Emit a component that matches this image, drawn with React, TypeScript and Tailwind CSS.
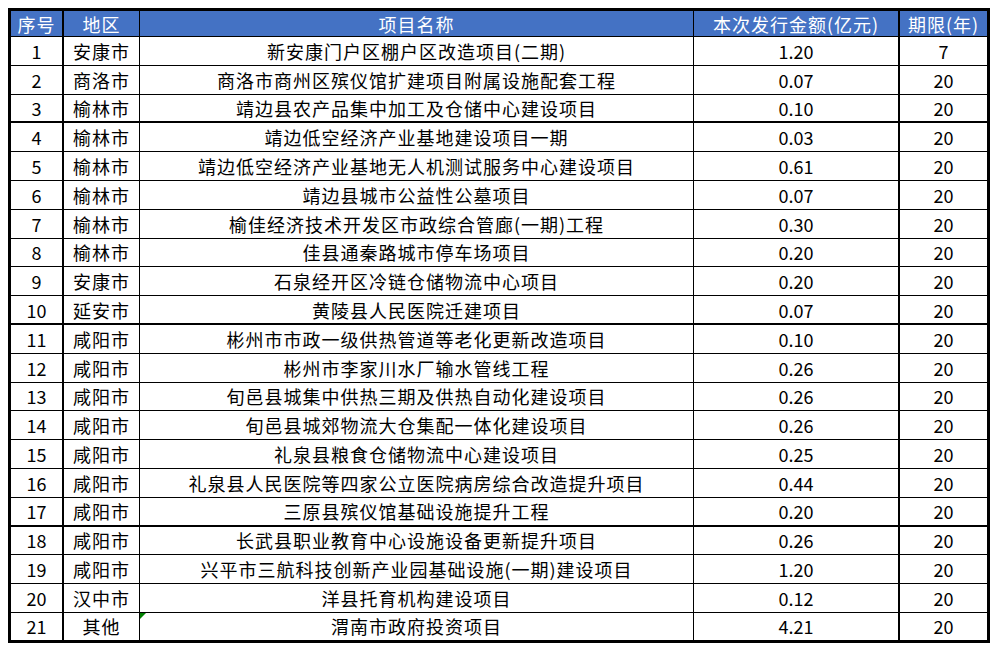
const rows: [string, string, string, string][] = [
  ["安康市", "新安康门户区棚户区改造项目(二期)", "1.20", "7"],
  ["商洛市", "商洛市商州区殡仪馆扩建项目附属设施配套工程", "0.07", "20"],
  ["榆林市", "靖边县农产品集中加工及仓储中心建设项目", "0.10", "20"],
  ["榆林市", "靖边低空经济产业基地建设项目一期", "0.03", "20"],
  ["榆林市", "靖边低空经济产业基地无人机测试服务中心建设项目", "0.61", "20"],
  ["榆林市", "靖边县城市公益性公墓项目", "0.07", "20"],
  ["榆林市", "榆佳经济技术开发区市政综合管廊(一期)工程", "0.30", "20"],
  ["榆林市", "佳县通秦路城市停车场项目", "0.20", "20"],
  ["安康市", "石泉经开区冷链仓储物流中心项目", "0.20", "20"],
  ["延安市", "黄陵县人民医院迁建项目", "0.07", "20"],
  ["咸阳市", "彬州市市政一级供热管道等老化更新改造项目", "0.10", "20"],
  ["咸阳市", "彬州市李家川水厂输水管线工程", "0.26", "20"],
  ["咸阳市", "旬邑县城集中供热三期及供热自动化建设项目", "0.26", "20"],
  ["咸阳市", "旬邑县城郊物流大仓集配一体化建设项目", "0.26", "20"],
  ["咸阳市", "礼泉县粮食仓储物流中心建设项目", "0.25", "20"],
  ["咸阳市", "礼泉县人民医院等四家公立医院病房综合改造提升项目", "0.44", "20"],
  ["咸阳市", "三原县殡仪馆基础设施提升工程", "0.20", "20"],
  ["咸阳市", "长武县职业教育中心设施设备更新提升项目", "0.26", "20"],
  ["咸阳市", "兴平市三航科技创新产业园基础设施(一期)建设项目", "1.20", "20"],
  ["汉中市", "洋县托育机构建设项目", "0.12", "20"],
  ["其他", "渭南市政府投资项目", "4.21", "20"],
];

// rows after which the horizontal rule is heavier
const thick = new Set([3, 10, 17]);

const cols = "grid grid-cols-[53px_76px_554px_206px_87px]";
const cell = "flex items-center justify-center whitespace-nowrap";
const cjk = "tracking-[1px]";

export default function App() {
  return (
    <div className="min-h-screen bg-white pt-2 pl-2">
      <div
        className="w-[982px] border-[3px] border-black text-[18px] leading-none text-black"
        style={{ fontFamily: '"Noto Sans CJK SC", "Noto Sans", sans-serif' }}
      >
        <div className={`${cols} h-[26px] bg-[#4472c4] text-white border-b border-black ${cjk}`}>
          <div className={`${cell} border-r-2 border-black`}>序号</div>
          <div className={`${cell} border-r border-black`}>地区</div>
          <div className={`${cell} border-r border-black`}>项目名称</div>
          <div className={`${cell} border-r-2 border-black`}>本次发行金额(亿元)</div>
          <div className={cell}>期限(年)</div>
        </div>
        {rows.map((r, i) => {
          const n = i + 1;
          const last = n === rows.length;
          const rule = last ? "h-[27px]" : thick.has(n) ? "h-[28.8px] border-b-2 border-black" : "h-[28.8px] border-b border-black";
          return (
            <div key={n} className={`${cols} box-border ${rule}`}>
              <div className={`${cell} border-r-2 border-black`}>{n}</div>
              <div className={`${cell} ${cjk} border-r border-black`}>{r[0]}</div>
              <div className={`${cell} ${cjk} relative border-r border-black`}>
                {last && (
                  <svg className="absolute left-0 top-0" width="6" height="6" viewBox="0 0 6 6">
                    <polygon points="0,0 6,0 0,6" fill="#008000" />
                  </svg>
                )}
                {r[1]}
              </div>
              <div className={`${cell} border-r-2 border-black`}>{r[2]}</div>
              <div className={cell}>{r[3]}</div>
            </div>
          );
        })}
      </div>
    </div>
  );
}
